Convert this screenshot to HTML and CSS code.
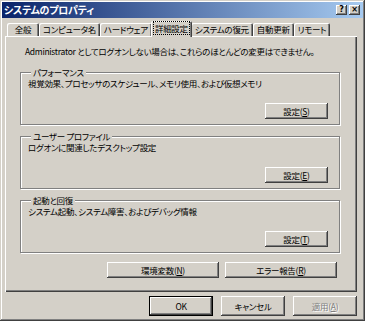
FILE: index.html
```html
<!DOCTYPE html>
<html lang="ja">
<head>
    <meta charset="UTF-8">
    <title>システムのプロパティ</title>
    <link rel="stylesheet" href="styles.css">
</head>
<body>
    <div class="window">
        <div class="titlebar">
            <span class="title">システムのプロパティ</span>
            <div class="title-buttons">
                <span class="tbtn">?</span>
                <span class="tbtn close">×</span>
            </div>
        </div>
        <div class="content">
            <div class="tabs">
                <div class="tab first">全般</div>
                <div class="tab">コンピュータ名</div>
                <div class="tab">ハードウェア</div>
                <div class="tab active"><span class="focus">詳細設定</span></div>
                <div class="tab">システムの復元</div>
                <div class="tab">自動更新</div>
                <div class="tab">リモート</div>
            </div>
            <div class="panel">
                <p class="note">Administrator としてログオンしない場合は、これらのほとんどの変更はできません。</p>
                <fieldset class="group">
                    <legend>パフォーマンス</legend>
                    <p class="desc">視覚効果、プロセッサのスケジュール、メモリ使用、および仮想メモリ</p>
                    <div class="group-actions"><button class="btn">設定(<u>S</u>)</button></div>
                </fieldset>
                <fieldset class="group">
                    <legend>ユーザー プロファイル</legend>
                    <p class="desc">ログオンに関連したデスクトップ設定</p>
                    <div class="group-actions"><button class="btn">設定(<u>E</u>)</button></div>
                </fieldset>
                <fieldset class="group">
                    <legend>起動と回復</legend>
                    <p class="desc">システム起動、システム障害、およびデバッグ情報</p>
                    <div class="group-actions"><button class="btn">設定(<u>T</u>)</button></div>
                </fieldset>
                <div class="extra-actions">
                    <button class="btn wide">環境変数(<u>N</u>)</button>
                    <button class="btn wide">エラー報告(<u>R</u>)</button>
                </div>
            </div>
            <div class="dialog-actions">
                <button class="btn dlg default">OK</button>
                <button class="btn dlg">キャンセル</button>
                <button class="btn dlg" disabled>適用(<u>A</u>)</button>
            </div>
        </div>
    </div>
</body>
</html>
```

FILE: styles.css
```css
body {
    margin: 0;
    background: #d4d0c8;
    font-family: "Noto Sans CJK JP", "Liberation Sans", sans-serif;
    font-size: 8.5px;
    letter-spacing: -0.3px;
    font-feature-settings: "palt";
    color: #000;
}
.window {
    width: 365px;
    height: 321px;
    box-sizing: border-box;
    padding: 2px;
    background: #d4d0c8;
    box-shadow: inset -1px -1px #404040, inset 1px 1px #d4d0c8, inset -2px -2px #808080, inset 2px 2px #fff;
}
.titlebar {
    height: 16px;
    background: linear-gradient(to right, #0a246a, #a6caf0);
    display: flex;
    align-items: center;
    justify-content: space-between;
    padding: 0 3px 0 2px;
}
.title {
    color: #fff;
    font-weight: bold;
    font-size: 10px;
    line-height: 16px;
}
.title-buttons {
    display: flex;
    gap: 2px;
}
.tbtn {
    width: 11px;
    height: 10px;
    background: #d4d0c8;
    box-shadow: inset -1px -1px #404040, inset 1px 1px #fff, inset -2px -2px #808080;
    font: bold 8px/10px "DejaVu Sans", sans-serif;
    letter-spacing: 0;
    text-align: center;
}
.content {
    padding: 3px 6px 0 3px;
}
.tabs {
    display: flex;
    align-items: flex-end;
    height: 15px;
    padding-left: 2px;
}
.tab {
    height: 13px;
    padding: 0 4px;
    min-width: 24px;
    text-align: center;
    line-height: 13px;
    border-radius: 2px 2px 0 0;
    box-shadow: inset 1px 1px #fff, inset -1px 0 #404040, inset -2px 0 #808080;
    background: #d4d0c8;
}
.tab.active {
    height: 16px;
    margin: 0 -1px -1px -1px;
    padding: 0 3px;
    line-height: 15px;
    position: relative;
    z-index: 1;
}
.focus {
    outline: 1px dotted #000;
    padding: 0 1px;
}
.panel {
    padding: 9px 17px 14px 15px;
    box-shadow: inset 1px 1px #fff, inset -1px -1px #404040, inset -2px -2px #808080;
}
.note {
    margin: 0 0 10px 5px;
    line-height: 12px;
    white-space: nowrap;
}
.group {
    margin: 0 0 6px 0;
    padding: 0 11px 5px 7px;
    border: 1px solid #808080;
    box-shadow: 1px 1px #fff, inset 1px 1px #fff;
    min-inline-size: 0;
}
.group legend {
    padding: 0 2px;
    margin-left: 3px;
    line-height: 10px;
    background: #d4d0c8;
}
.desc {
    margin: 0;
    line-height: 12px;
}
.group-actions {
    display: flex;
    justify-content: flex-end;
    margin-top: 14px;
}
.btn {
    font: inherit;
    font-feature-settings: "palt";
    letter-spacing: -0.3px;
    color: #000;
    background: #d4d0c8;
    border: none;
    padding: 0;
    width: 63px;
    height: 16px;
    line-height: 16px;
    box-shadow: inset -1px -1px #404040, inset 1px 1px #fff, inset -2px -2px #808080, inset 2px 2px #d4d0c8;
}
.btn.wide {
    width: 112px;
}
.extra-actions {
    display: flex;
    justify-content: flex-end;
    gap: 6px;
    margin-top: 9px;
    padding-right: 3px;
}
.dialog-actions {
    display: flex;
    justify-content: flex-end;
    gap: 8px;
    padding-top: 4px;
    padding-right: 0;
}
.btn.dlg {
    width: 64px;
    height: 20px;
}
.btn.default {
    box-shadow: inset 0 0 0 1px #000, inset -2px -2px #404040, inset 2px 2px #fff, inset -3px -3px #808080;
}
.btn:disabled {
    color: #808080;
    text-shadow: 1px 1px #fff;
}
```
